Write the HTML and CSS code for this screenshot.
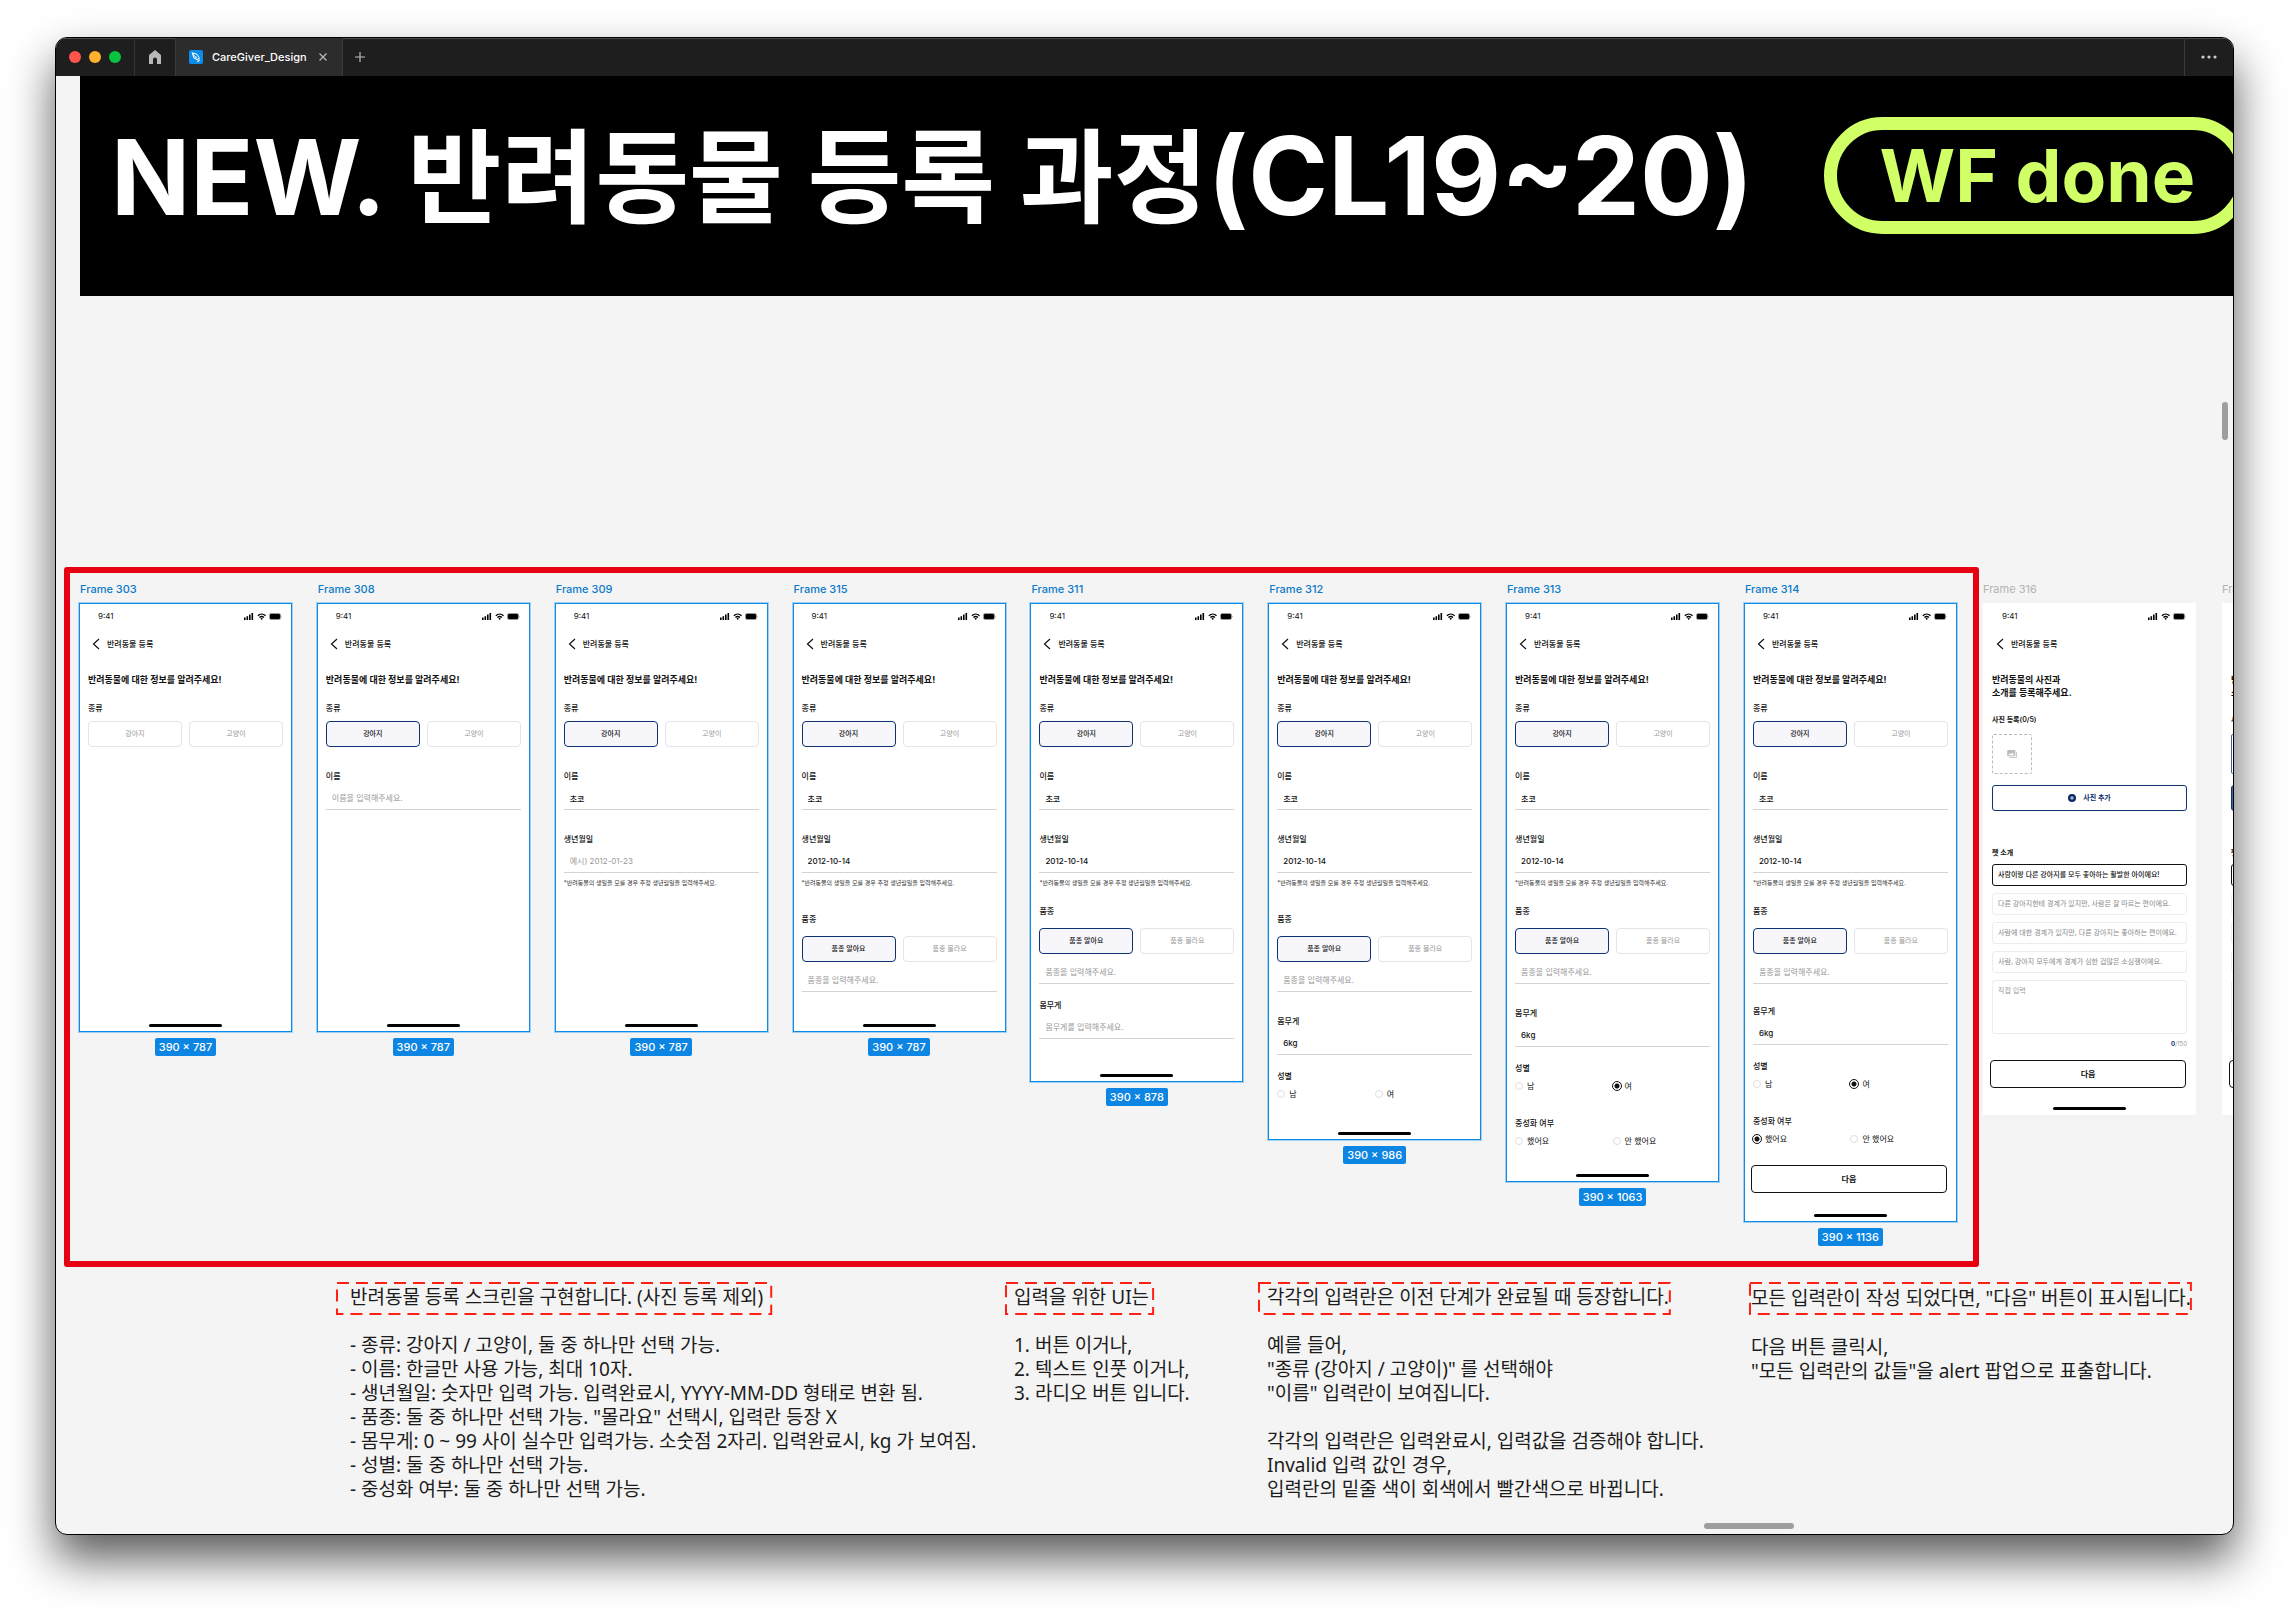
FILE: index.html
```html
<!DOCTYPE html>
<html lang="ko">
<head>
<meta charset="utf-8">
<title>CareGiver_Design</title>
<link rel="stylesheet" href="styles.css">
</head>
<body>
<svg class="sprite" aria-hidden="true">
  <symbol id="status" viewBox="0 0 38 8">
    <path d="M0 5.5h1.6V8H0zM2.5 4.3h1.6V8H2.5zM5 2.6h1.6V8H5zM7.5 1h1.6v7H7.5z"/>
    <path d="M13.4 3.2a6.4 6.4 0 0 1 8.6 0l-.9 1a5 5 0 0 0-6.8 0zM15 5a4 4 0 0 1 5.4 0l-.9 1a2.700 2.700 0 0 0-3.600 0zM17.700 8l-1.300-1.400a2 2 0 0 1 2.600 0z"/>
    <rect x="25.500" y="1.500" width="11" height="6" rx="1.500" fill="none" stroke="#999"/>
    <rect x="26" y="2" width="10" height="5" rx="1"/>
    <path d="M37.300 3.500v2q.700-.300.700-1t-.700-1z" fill="#999"/>
  </symbol>
  <symbol id="back" viewBox="0 0 8 12"><path d="M7 1 1.500 6 7 11" fill="none" stroke="#111" stroke-width="1.200"/></symbol>
</svg>
<main class="window">
  <header class="titlebar">
    <div class="lights"><i class="red"></i><i class="amber"></i><i class="green"></i></div>
    <button class="home" aria-label="홈"><svg width="12" height="14" viewBox="0 0 12 14"><path d="M6 0 0 5v9h4V9.500a2 2 0 0 1 4 0V14h4V5z" fill="#b8b8b8"/></svg></button>
    <div class="tab">
      <svg width="14" height="14" viewBox="0 0 14 14"><rect width="14" height="14" rx="2" fill="#0c8ce9"/><path d="M3.200 2.800l4.600 1.400 2.200 3.300-1.500 2.200L5 8.200zM3.200 2.800l3.300 4.400M10 8v3.200H8" fill="none" stroke="#fff" stroke-width="1"/><circle cx="7" cy="7.300" r=".9" fill="#fff"/></svg>
      <span>CareGiver_Design</span>
      <button aria-label="탭 닫기"><svg width="8" height="8" viewBox="0 0 8 8"><path d="M.500.500l7 7M7.500.500l-7 7" stroke="#bbb" stroke-width="1.200"/></svg></button>
    </div>
    <button class="add" aria-label="새 탭"><svg width="10" height="10" viewBox="0 0 10 10"><path d="M5 0v10M0 5h10" stroke="#bbb" stroke-width="1.200"/></svg></button>
    <button class="more" aria-label="더 보기"><svg width="16" height="4" viewBox="0 0 16 4"><circle cx="2" cy="2" r="1.600"/><circle cx="8" cy="2" r="1.600"/><circle cx="14" cy="2" r="1.600"/></svg></button>
  </header>

  <section class="canvas">
    <div class="banner">
      <h1>NEW. <span>반려동물</span> <span>등록</span> <span>과정</span><span class="range">(CL19~20)</span></h1>
      <span class="pill">WF done</span>
    </div>

    <div class="board">
      <div class="region">

        <article class="frame">
          <h2>Frame 303</h2>
          <div class="screen h787">
            <div class="status"><span>9:41</span><svg width="38" height="8"><use href="#status"/></svg></div>
            <div class="nav"><svg width="8" height="12"><use href="#back"/></svg><span>반려동물 등록</span></div>
            <h3>반려동물에 대한 정보를 알려주세요!</h3>
            <p class="label first">종류</p>
            <div class="choices"><button>강아지</button><button>고양이</button></div>
            <i class="bar"></i>
          </div>
          <span class="size">390 × 787</span>
        </article>

        <article class="frame">
          <h2>Frame 308</h2>
          <div class="screen h787">
            <div class="status"><span>9:41</span><svg width="38" height="8"><use href="#status"/></svg></div>
            <div class="nav"><svg width="8" height="12"><use href="#back"/></svg><span>반려동물 등록</span></div>
            <h3>반려동물에 대한 정보를 알려주세요!</h3>
            <p class="label first">종류</p>
            <div class="choices"><button class="on">강아지</button><button>고양이</button></div>
            <label class="label" for="n308">이름</label>
            <input class="field" id="n308" placeholder="이름을 입력해주세요.">
            <i class="bar"></i>
          </div>
          <span class="size">390 × 787</span>
        </article>

        <article class="frame">
          <h2>Frame 309</h2>
          <div class="screen h787">
            <div class="status"><span>9:41</span><svg width="38" height="8"><use href="#status"/></svg></div>
            <div class="nav"><svg width="8" height="12"><use href="#back"/></svg><span>반려동물 등록</span></div>
            <h3>반려동물에 대한 정보를 알려주세요!</h3>
            <p class="label first">종류</p>
            <div class="choices"><button class="on">강아지</button><button>고양이</button></div>
            <label class="label" for="n309">이름</label>
            <input class="field" id="n309" value="초코">
            <label class="label" for="b309">생년월일</label>
            <input class="field" id="b309" placeholder="예시) 2012-01-23">
            <p class="hint">*반려동물의 생일을 모를 경우 추정 생년월일을 입력해주세요.</p>
            <i class="bar"></i>
          </div>
          <span class="size">390 × 787</span>
        </article>

        <article class="frame">
          <h2>Frame 315</h2>
          <div class="screen h787">
            <div class="status"><span>9:41</span><svg width="38" height="8"><use href="#status"/></svg></div>
            <div class="nav"><svg width="8" height="12"><use href="#back"/></svg><span>반려동물 등록</span></div>
            <h3>반려동물에 대한 정보를 알려주세요!</h3>
            <p class="label first">종류</p>
            <div class="choices"><button class="on">강아지</button><button>고양이</button></div>
            <label class="label" for="n315">이름</label>
            <input class="field" id="n315" value="초코">
            <label class="label" for="b315">생년월일</label>
            <input class="field" id="b315" value="2012-10-14">
            <p class="hint">*반려동물의 생일을 모를 경우 추정 생년월일을 입력해주세요.</p>
            <label class="label breed roomy" for="k315">품종</label>
            <div class="choices"><button class="on">품종 알아요</button><button>품종 몰라요</button></div>
            <input class="field under" id="k315" placeholder="품종을 입력해주세요.">
            <i class="bar"></i>
          </div>
          <span class="size">390 × 787</span>
        </article>

        <article class="frame">
          <h2>Frame 311</h2>
          <div class="screen h878">
            <div class="status"><span>9:41</span><svg width="38" height="8"><use href="#status"/></svg></div>
            <div class="nav"><svg width="8" height="12"><use href="#back"/></svg><span>반려동물 등록</span></div>
            <h3>반려동물에 대한 정보를 알려주세요!</h3>
            <p class="label first">종류</p>
            <div class="choices"><button class="on">강아지</button><button>고양이</button></div>
            <label class="label" for="n311">이름</label>
            <input class="field" id="n311" value="초코">
            <label class="label" for="b311">생년월일</label>
            <input class="field" id="b311" value="2012-10-14">
            <p class="hint">*반려동물의 생일을 모를 경우 추정 생년월일을 입력해주세요.</p>
            <label class="label breed" for="k311">품종</label>
            <div class="choices"><button class="on">품종 알아요</button><button>품종 몰라요</button></div>
            <input class="field under" id="k311" placeholder="품종을 입력해주세요.">
            <label class="label tight" for="w311">몸무게</label>
            <input class="field" id="w311" placeholder="몸무게를 입력해주세요.">
            <i class="bar"></i>
          </div>
          <span class="size">390 × 878</span>
        </article>

        <article class="frame">
          <h2>Frame 312</h2>
          <div class="screen h986">
            <div class="status"><span>9:41</span><svg width="38" height="8"><use href="#status"/></svg></div>
            <div class="nav"><svg width="8" height="12"><use href="#back"/></svg><span>반려동물 등록</span></div>
            <h3>반려동물에 대한 정보를 알려주세요!</h3>
            <p class="label first">종류</p>
            <div class="choices"><button class="on">강아지</button><button>고양이</button></div>
            <label class="label" for="n312">이름</label>
            <input class="field" id="n312" value="초코">
            <label class="label" for="b312">생년월일</label>
            <input class="field" id="b312" value="2012-10-14">
            <p class="hint">*반려동물의 생일을 모를 경우 추정 생년월일을 입력해주세요.</p>
            <label class="label breed roomy" for="k312">품종</label>
            <div class="choices"><button class="on">품종 알아요</button><button>품종 몰라요</button></div>
            <input class="field under" id="k312" placeholder="품종을 입력해주세요.">
            <label class="label" for="w312">몸무게</label>
            <input class="field" id="w312" value="6kg">
            <p class="label tight">성별</p>
            <div class="radios"><label><input type="radio" name="g312">남</label><label><input type="radio" name="g312">여</label></div>
            <i class="bar"></i>
          </div>
          <span class="size">390 × 986</span>
        </article>

        <article class="frame">
          <h2>Frame 313</h2>
          <div class="screen h1063">
            <div class="status"><span>9:41</span><svg width="38" height="8"><use href="#status"/></svg></div>
            <div class="nav"><svg width="8" height="12"><use href="#back"/></svg><span>반려동물 등록</span></div>
            <h3>반려동물에 대한 정보를 알려주세요!</h3>
            <p class="label first">종류</p>
            <div class="choices"><button class="on">강아지</button><button>고양이</button></div>
            <label class="label" for="n313">이름</label>
            <input class="field" id="n313" value="초코">
            <label class="label" for="b313">생년월일</label>
            <input class="field" id="b313" value="2012-10-14">
            <p class="hint">*반려동물의 생일을 모를 경우 추정 생년월일을 입력해주세요.</p>
            <label class="label breed" for="k313">품종</label>
            <div class="choices"><button class="on">품종 알아요</button><button>품종 몰라요</button></div>
            <input class="field under" id="k313" placeholder="품종을 입력해주세요.">
            <label class="label" for="w313">몸무게</label>
            <input class="field" id="w313" value="6kg">
            <p class="label tight">성별</p>
            <div class="radios"><label><input type="radio" name="g313">남</label><label><input type="radio" name="g313" checked>여</label></div>
            <p class="label">중성화 여부</p>
            <div class="radios"><label><input type="radio" name="s313">했어요</label><label><input type="radio" name="s313">안 했어요</label></div>
            <i class="bar"></i>
          </div>
          <span class="size">390 × 1063</span>
        </article>

        <article class="frame">
          <h2>Frame 314</h2>
          <div class="screen h1136">
            <div class="status"><span>9:41</span><svg width="38" height="8"><use href="#status"/></svg></div>
            <div class="nav"><svg width="8" height="12"><use href="#back"/></svg><span>반려동물 등록</span></div>
            <h3>반려동물에 대한 정보를 알려주세요!</h3>
            <p class="label first">종류</p>
            <div class="choices"><button class="on">강아지</button><button>고양이</button></div>
            <label class="label" for="n314">이름</label>
            <input class="field" id="n314" value="초코">
            <label class="label" for="b314">생년월일</label>
            <input class="field" id="b314" value="2012-10-14">
            <p class="hint">*반려동물의 생일을 모를 경우 추정 생년월일을 입력해주세요.</p>
            <label class="label breed" for="k314">품종</label>
            <div class="choices"><button class="on">품종 알아요</button><button>품종 몰라요</button></div>
            <input class="field under" id="k314" placeholder="품종을 입력해주세요.">
            <label class="label snug" for="w314">몸무게</label>
            <input class="field" id="w314" value="6kg">
            <p class="label tight">성별</p>
            <div class="radios"><label><input type="radio" name="g314">남</label><label><input type="radio" name="g314" checked>여</label></div>
            <p class="label">중성화 여부</p>
            <div class="radios"><label><input type="radio" name="s314" checked>했어요</label><label><input type="radio" name="s314">안 했어요</label></div>
            <button class="next late">다음</button>
            <i class="bar"></i>
          </div>
          <span class="size">390 × 1136</span>
        </article>
      </div>

      <div class="loose">
        <article class="frame idle">
          <h2>Frame 316</h2>
          <div class="screen h940">
            <div class="status"><span>9:41</span><svg width="38" height="8"><use href="#status"/></svg></div>
            <div class="nav"><svg width="8" height="12"><use href="#back"/></svg><span>반려동물 등록</span></div>
            <h3>반려동물의 사진과<br>소개를 등록해주세요.</h3>
            <p class="label small photos">사진 등록(0/5)</p>
            <button class="photo" aria-label="사진 선택"><svg width="10" height="8" viewBox="0 0 10 8"><path d="M1 0h6.500q.8 0 .8.800v4.700q0 .8-.8.800H1q-.8 0-.8-.800V.800Q.2 0 1 0zm.3 5.200h6L5.300 2.600 3.900 4.300l-1-1zM9 2h.8v5.200q0 .8-.8.800H2v-.8h7z" fill="#bbb" fill-rule="evenodd"/></svg></button>
            <button class="addphoto"><svg width="8" height="8" viewBox="0 0 8 8"><circle cx="4" cy="4" r="4" fill="#0b2a66"/><path d="M4 2v4M2 4h4" stroke="#fff" stroke-width=".8"/></svg>사진 추가</button>
            <label class="label small intro" for="t316">펫 소개</label>
            <div class="options">
              <button class="on">사람이랑 다른 강아지를 모두 좋아하는 활발한 아이에요!</button>
              <button>다른 강아지한테 경계가 있지만, 사람은 잘 따르는 편이에요.</button>
              <button>사람에 대한 경계가 있지만, 다른 강아지는 좋아하는 편이에요.</button>
              <button>사람, 강아지 모두에게 경계가 심한 겁많은 소심쟁이에요.</button>
              <textarea id="t316" placeholder="직접 입력"></textarea>
            </div>
            <p class="count"><b>0</b>/150</p>
            <button class="next">다음</button>
            <i class="bar"></i>
          </div>
        </article>

        <article class="frame idle">
          <h2>Frame 317</h2>
          <div class="screen h940">
            <div class="status"></div>
            <div class="nav"></div>
            <h3>반려동물의 사진과<br>소개를 등록해주세요.</h3>
            <p class="label small photos">사진 등록(1/5)</p>
            <button class="photo filled" aria-label="사진 선택"></button>
            <button class="addphoto full">사진 추가</button>
            <label class="label small intro" for="t317">펫 소개</label>
            <div class="options">
              <button class="on"></button>
              <button></button>
              <button></button>
              <button></button>
              <textarea id="t317"></textarea>
            </div>
            <p class="count"></p>
            <button class="next">다음</button>
          </div>
        </article>
      </div>
    </div>

    <div class="notes">
      <section class="note n1">
        <h4><svg aria-hidden="true"><rect width="100%" height="100%"/></svg>반려동물 등록 스크린을 구현합니다. (사진 등록 제외)</h4>
        <p>- 종류: 강아지 / 고양이, 둘 중 하나만 선택 가능.<br>- 이름: 한글만 사용 가능, 최대 10자.<br>- 생년월일: 숫자만 입력 가능. 입력완료시, YYYY-MM-DD 형태로 변환 됨.<br>- 품종: 둘 중 하나만 선택 가능. "몰라요" 선택시, 입력란 등장 X<br>- 몸무게: 0 ~ 99 사이 실수만 입력가능. 소숫점 2자리. 입력완료시, kg 가 보여짐.<br>- 성별: 둘 중 하나만 선택 가능.<br>- 중성화 여부: 둘 중 하나만 선택 가능.</p>
      </section>
      <section class="note n2">
        <h4><svg aria-hidden="true"><rect width="100%" height="100%"/></svg>입력을 위한 UI는</h4>
        <p>1. 버튼 이거나,<br>2. 텍스트 인풋 이거나,<br>3. 라디오 버튼 입니다.</p>
      </section>
      <section class="note n3">
        <h4><svg aria-hidden="true"><rect width="100%" height="100%"/></svg>각각의 입력란은 이전 단계가 완료될 때 등장합니다.</h4>
        <p>예를 들어,<br>"종류 (강아지 / 고양이)" 를 선택해야<br>"이름" 입력란이 보여집니다.<br><br>각각의 입력란은 입력완료시, 입력값을 검증해야 합니다.<br>Invalid 입력 값인 경우,<br>입력란의 밑줄 색이 회색에서 빨간색으로 바뀝니다.</p>
      </section>
      <section class="note n4">
        <h4><svg aria-hidden="true"><rect width="100%" height="100%"/></svg>모든 입력란이 작성 되었다면, "다음" 버튼이 표시됩니다.</h4>
        <p>다음 버튼 클릭시,<br>"모든 입력란의 값들"을 alert 팝업으로 표출합니다.</p>
      </section>
    </div>
    <i class="thumb-y"></i>
    <i class="thumb-x"></i>
  </section>
</main>
</body>
</html>
```
FILE: styles.css
```css
* { box-sizing: border-box; margin: 0; padding: 0; }

body {
  min-height: 100vh;
  padding: 37px 55px 73px;
  background: #fff;
  overflow: hidden;
  font-family: Inter, "Noto Sans CJK KR", sans-serif;
  color: #111;
}

button, input, textarea { font: inherit; color: inherit; background: none; border: 0; outline: 0; }
.sprite { position: absolute; width: 0; height: 0; }

/* window */
.window {
  display: flex;
  flex-direction: column;
  min-height: calc(100vh - 110px);
  border: 1px solid #000;
  border-radius: 12px;
  background: #f4f4f4;
  overflow: hidden;
  box-shadow: 0 24px 46px rgba(0, 0, 0, .65);
}
.titlebar {
  display: flex;
  height: 38px;
  background: #1e1e1e;
  box-shadow: inset 0 1px #4c4c4c;
  color: #fff;
}
.titlebar button { display: flex; align-items: center; justify-content: center; }
.lights { display: flex; align-items: center; gap: 8px; width: 79px; padding-left: 13px; border-right: 1px solid #333; }
.lights i { width: 12px; height: 12px; border-radius: 50%; }
.red { background: #ff544d; }
.amber { background: #ffb02e; }
.green { background: #07c33f; }
.home { width: 40px; }
.tab {
  display: flex;
  align-items: center;
  width: 168px;
  padding: 0 15px 0 13px;
  background: #2c2c2c;
  border: solid #3a3a3a;
  border-width: 0 1px;
  font-size: 11px;
  font-weight: 500;
}
.tab span { margin: 0 auto 0 9px; }
.add { width: 34px; }
.more { width: 49px; margin-left: auto; border-left: 1px solid #3a3a3a; fill: #ccc; }

/* canvas */
.canvas { position: relative; flex: 1; overflow: hidden; }
.banner {
  display: flex;
  align-items: center;
  gap: 70px;
  height: 220px;
  margin-left: 24px;
  padding: 0 0 21px 31px;
  background: #000;
  color: #fff;
  white-space: nowrap;
}
.banner h1 { flex: none; padding-top: 3px; font-size: 104px; line-height: 128px; font-weight: 700; }
.banner h1 span { font-size: 102px; }
.banner h1 .range { font-size: 108px; }
.pill {
  flex: none;
  border: 13px solid #d1ff66;
  border-radius: 59px;
  padding: 0 43px;
  font-size: 73px;
  line-height: 91px;
  font-weight: 700;
  color: #d1ff66;
}

.board { display: flex; align-items: flex-start; margin: 271px 0 0 8px; }
.region {
  flex: 1;
  display: flex;
  align-items: flex-start;
  justify-content: space-between;
  height: 700px;
  padding: 8px 16px 0 9px;
  border: 6px solid #e60012;
  border-radius: 3px;
}
.loose { flex: none; display: flex; gap: 26px; width: 254px; padding: 14px 0 0 4px; overflow: hidden; }
.frame { flex: none; display: flex; flex-direction: column; width: 213px; }
.frame h2 { padding-left: 1px; margin-bottom: 6px; font-size: 11px; line-height: 16px; font-weight: 500; color: #0a7ac9; }
.idle h2 { color: #b3b3b3; font-weight: 400; padding: 0; }
.size {
  align-self: center;
  margin-top: 6px;
  padding: 0 4px;
  border-radius: 2px;
  background: #0d85e3;
  color: #fff;
  font-size: 11px;
  line-height: 18px;
  font-weight: 500;
}

/* phone screen */
.screen {
  display: flex;
  flex-direction: column;
  padding: 0 9px;
  background: #fff;
  box-shadow: inset 0 0 0 1px #0c8ce9, 0 0 0 1px rgba(12, 140, 233, .35);
  font-size: 8px;
  line-height: 12px;
}
.idle .screen { box-shadow: none; }
.h787 { min-height: 429px; }
.h878 { min-height: 479px; }
.h940 { min-height: 512px; }
.h986 { min-height: 537px; }
.h1063 { min-height: 579px; }
.h1136 { min-height: 619px; }
.status { display: flex; align-items: center; justify-content: space-between; height: 25px; padding: 0 1px 0 10px; }
.status svg { margin-top: 1px; }
.nav { display: flex; align-items: center; gap: 7px; height: 32px; padding-left: 4px; font-weight: 500; }
.screen h3 { margin-top: 13px; font-size: 9px; line-height: 13px; font-weight: 700; white-space: nowrap; }
.label { display: block; margin-top: 23px; font-weight: 500; }
.label.first { margin: 16px 0 7px; }
.label.breed { margin: 17px 0 11px; }
.label.roomy { margin-top: 25px; }
.label.tight { margin-top: 15px; }
.label.snug { margin-top: 21px; }
.label.small { font-size: 7px; font-weight: 600; }
.label.photos { margin: 15px 0 8px; }
.label.intro { margin: 36px 0 5px; }
.choices { display: flex; gap: 7px; }
.choices button {
  flex: 1;
  height: 26px;
  border: 1px solid #e4e4ec;
  border-radius: 4px;
  font-size: 7px;
  color: #999;
}
.choices .on { border-color: #0f3272; background: #f7f7fb; color: #111; font-weight: 500; }
.field { height: 28px; padding: 5px 6px 0; border-bottom: 1px solid #d4d4d6; font-weight: 500; }
.field.under { margin-top: 2px; }
.field::placeholder, .options textarea::placeholder { color: #999; font-weight: 400; opacity: 1; }
.hint { margin-top: 5px; font-size: 6px; line-height: 10px; color: #333; white-space: nowrap; }
.radios { display: flex; margin-top: 6px; }
.radios + .label { margin-top: 25px; }
.radios label { display: flex; align-items: center; gap: 4px; flex: 1; }
.radios input {
  appearance: none;
  width: 8px;
  height: 8px;
  border: 1px solid #dedee6;
  border-radius: 50%;
}
.radios input:checked {
  width: 10px;
  height: 10px;
  margin: 0 -1px;
  border-color: #111;
  background: radial-gradient(circle, #111 2px, #fff 3px);
}
.next {
  height: 28px;
  margin: 11px 1px 0 -2px;
  border: 1px solid #111;
  border-radius: 4px;
  font-weight: 600;
}
.next.late { margin-top: 20px; }
.bar { align-self: center; width: 73px; height: 3px; margin: auto 0 5px; border-radius: 2px; background: #000; }
.photo { display: flex; align-items: center; justify-content: center; width: 40px; height: 40px; border: 1px dashed #bbb; border-radius: 2px; }
.photo.filled { border: 1px solid #3f63a0; }
.addphoto {
  display: flex;
  align-items: center;
  justify-content: center;
  gap: 7px;
  height: 26px;
  margin-top: 11px;
  border: 1px solid #0f3272;
  border-radius: 3px;
  font-size: 7px;
  font-weight: 600;
  color: #0b2a66;
}
.addphoto.full { background: #4a6796; }
.options { display: flex; flex-direction: column; gap: 7px; }
.options button, .options textarea {
  height: 22px;
  padding: 0 5px;
  border: 1px solid #ececf3;
  border-radius: 3px;
  font-size: 7px;
  color: #888;
  text-align: left;
  white-space: nowrap;
}
.options .on { border-color: #111; color: #111; font-weight: 500; }
.options textarea { height: 54px; padding-top: 4px; resize: none; }
.count { margin-top: 5px; min-height: 10px; font-size: 6px; line-height: 10px; text-align: right; color: #999; }
.count b { color: #0f3272; }

/* notes */
.notes {
  display: grid;
  grid-template-columns: 669fr 253fr 491fr 484fr;
  padding: 15px 0 32px 280px;
  font: 19px/24px "Noto Sans", "Noto Sans CJK KR", sans-serif;
  color: #1c1c1c;
  white-space: nowrap;
}
.note { min-width: 0; }
.note h4 { position: relative; width: fit-content; margin-bottom: 18px; padding: 3px 9px 6px; font-weight: 400; }
.note h4 svg { position: absolute; inset: 1px; width: calc(100% - 2px); height: calc(100% - 2px); overflow: visible; }
.note rect { fill: none; stroke: #ff2015; stroke-width: 2; stroke-dasharray: 12 7; }
.note p { padding-left: 9px; }
.n1 h4 { padding-left: 14px; }
.n1 p { padding-left: 14px; }
.n2 h4 { padding-right: 5px; }
.n3 h4 { padding-right: 2px; }
.n4 h4 { padding: 4px 1px 5px 2px; }
.n4 p { padding: 2px 0 0 2px; }

.thumb-x, .thumb-y { position: absolute; border-radius: 3px; background: #9e9e9e; }
.thumb-x { right: 439px; bottom: 5px; width: 90px; height: 6px; }
.thumb-y { right: 5px; top: 326px; width: 6px; height: 38px; }
```
